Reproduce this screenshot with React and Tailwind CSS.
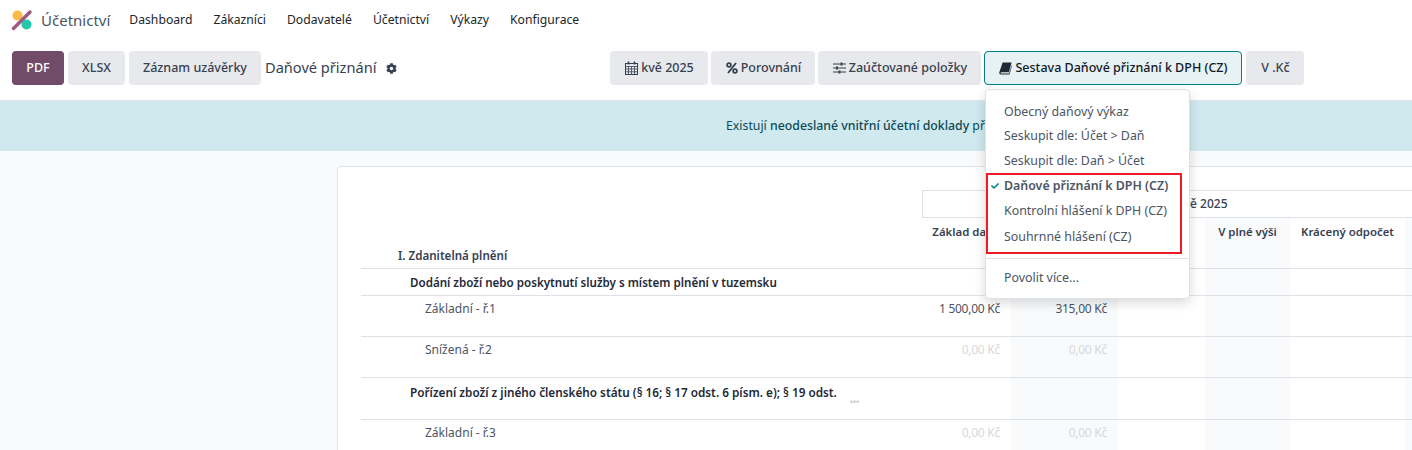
import { FaCheck, FaCog } from "react-icons/fa";

const navItems = ["Dashboard", "Zákazníci", "Dodavatelé", "Účetnictví", "Výkazy", "Konfigurace"];

const Logo = () => (
  <svg width="22" height="22" viewBox="0 0 22 22" className="shrink-0">
    <circle cx="6.5" cy="6.5" r="5" fill="#fbb945" />
    <circle cx="15.5" cy="15.5" r="5" fill="#21c7ab" />
    <path d="M2.5 19.5 L19 3" stroke="#9b5a82" strokeWidth="3.4" strokeLinecap="round" />
  </svg>
);

const CalendarIcon = () => (
  <svg width="13" height="14" viewBox="0 0 13 14" fill="none" stroke="currentColor" className="shrink-0">
    <rect x="0.5" y="2.5" width="12" height="11" />
    <path d="M0.5 5.5H12.5M0.5 8H12.5M0.5 10.8H12.5M3.5 5.5V13.5M6.5 5.5V13.5M9.5 5.5V13.5" strokeWidth="0.8" />
    <path d="M3.5 0.5V3.5M9.5 0.5V3.5" strokeWidth="1.6" />
  </svg>
);

const PercentIcon = () => (
  <svg width="12" height="12" viewBox="0 0 12 12" fill="none" stroke="currentColor" strokeWidth="1.7" className="shrink-0">
    <circle cx="3" cy="3" r="1.9" />
    <circle cx="9" cy="9" r="1.9" />
    <path d="M10 1L2 11" strokeWidth="1.9" />
  </svg>
);

const SlidersIcon = () => (
  <svg width="13" height="12" viewBox="0 0 13 12" fill="none" stroke="currentColor" className="shrink-0">
    <path d="M0 2H13M0 6H13M0 10H13" strokeWidth="1" />
    <path d="M8.5 0.5V3.5M4 4.5V7.5M6.5 8.5V11.5" strokeWidth="2" />
  </svg>
);

const BookIcon = () => (
  <svg width="13" height="13" viewBox="0 0 13 13" className="shrink-0">
    <path d="M3.6 0.5H12.6L10 10.3H2.2C1.4 10.3 1.4 11.5 2.2 11.5H10.2L12.6 3.2L13 3.6L10.6 12.6H2C0.5 12.6 0 11.4 0.4 10.1Z" fill="#1f2937" />
  </svg>
);

const Btn = ({ className = "", children }) => (
  <button className={`flex h-[34px] items-center justify-center whitespace-nowrap rounded text-[12.5px] font-medium ${className}`}>
    {children}
  </button>
);

const Cells = ({ first, base, tax, muted, firstClass = "" }) => (
  <>
    <div className={firstClass}>{first}</div>
    <div className={`pr-[11px] pt-[4px] text-right tracking-[-0.25px] ${muted ? "text-[#d5d8dc]" : "text-[#4b5563]"}`}>{base}</div>
    <div className={`bg-[#f9fafb] pr-[11px] pt-[4px] text-right tracking-[-0.25px] ${muted ? "text-[#d5d8dc]" : "text-[#4b5563]"}`}>{tax}</div>
    <div />
    <div className="bg-[#f9fafb]" />
    <div />
    <div className="bg-[#f9fafb]" />
  </>
);

const Row = ({ height, children }) => (
  <div className={`grid grid-cols-[543px_107px_107px_87px_85px_115px_1fr] border-b border-[#dee2e6] text-[12px] ${height}`}>
    {children}
  </div>
);

const App = () => {
  return (
    <div className="relative h-[450px] w-full overflow-hidden bg-white text-[#374151] font-['Noto_Sans',sans-serif]">
      {/* navbar */}
      <div className="flex h-10 items-center pl-[11px]">
        <Logo />
        <span className="ml-2 text-[15px] text-[#4b5563]">Účetnictví</span>
        <nav className="ml-[19px] flex gap-[21px] text-[12.2px] text-[#212529]">
          {navItems.map((item) => (
            <span key={item}>{item}</span>
          ))}
        </nav>
      </div>

      {/* control panel */}
      <div className="flex h-[61px] items-start border-b border-[#dee2e6] pl-3 pt-[11px]">
        <div className="flex gap-[4px]">
          <Btn className="w-[52px] bg-[#714b67] text-white">PDF</Btn>
          <Btn className="w-[57px] bg-[#e7e9ed]">XLSX</Btn>
          <Btn className="w-[132px] bg-[#e7e9ed]">Záznam uzávěrky</Btn>
        </div>
        <div className="ml-1 flex h-[34px] items-center gap-[10px]">
          <span className="text-[14.6px]">Daňové přiznání</span>
          <FaCog className="text-[11px]" />
        </div>
        <div className="ml-[213px] flex gap-[3px]">
          <Btn className="w-[98px] gap-[3px] bg-[#e7e9ed]"><CalendarIcon />kvě 2025</Btn>
          <Btn className="w-[104px] gap-[3px] bg-[#e7e9ed]"><PercentIcon />Porovnání</Btn>
          <Btn className="w-[163px] gap-[3px] bg-[#e7e9ed]"><SlidersIcon />Zaúčtované položky</Btn>
          <Btn className="w-[258px] gap-[3px] border border-[#017e84] bg-[#e6f2f3] text-[#111827]"><BookIcon />Sestava Daňové přiznání k DPH (CZ)</Btn>
          <Btn className="ml-[1px] w-[58px] bg-[#e7e9ed]">V .Kč</Btn>
        </div>
      </div>

      {/* alert */}
      <div className="flex h-[50px] items-center whitespace-nowrap bg-[#d0e9ee] pl-[726px] text-[12.3px] text-[#0c4a55]">
        <span>Existují <span className="font-medium">neodeslané vnitřní účetní doklady</span> před</span>
      </div>

      {/* report */}
      <div className="h-[299px] bg-[#f9fafb] pl-[337px] pt-[15px]">
        <div className="w-[1200px] rounded-tl border border-[#dee2e6] bg-white pl-[23px] pt-[23px]">
          <div className="ml-[561px] flex h-[28px] items-center whitespace-nowrap border border-[#dee2e6] pl-[254px] text-[12px] font-medium">
            kvě 2025
          </div>
          <Row height="h-[51px]">
            <div className="flex items-end pb-[4px] pl-[37px] text-[11.6px] font-semibold">I. Zdanitelná plnění</div>
            <div className="pr-[11px] pt-[5px] text-right text-[11.4px] font-semibold">Základ daně</div>
            <div className="bg-[#f9fafb]" />
            <div />
            <div className="bg-[#f9fafb] pt-[5px] text-center text-[11.4px] font-semibold">V plné výši</div>
            <div className="pt-[5px] text-center text-[11.4px] font-semibold">Krácený odpočet</div>
            <div className="bg-[#f9fafb]" />
          </Row>
          <Row height="h-[27px]">
            <Cells first="Dodání zboží nebo poskytnutí služby s místem plnění v tuzemsku" firstClass="whitespace-nowrap pl-[49px] pt-[5px] text-[11.6px] font-semibold text-[#1f2937]" />
          </Row>
          <Row height="h-[41px]">
            <Cells first="Základní - ř.1" firstClass="pl-[64px] pt-[4px] text-[#4b5563]" base="1 500,00 Kč" tax="315,00 Kč" />
          </Row>
          <Row height="h-[41px]">
            <Cells first="Snížená - ř.2" firstClass="pl-[64px] pt-[4px] text-[#4b5563]" base="0,00 Kč" tax="0,00 Kč" muted />
          </Row>
          <Row height="h-[42px]">
            <Cells
              first={
                <>
                  <span className="block whitespace-nowrap pt-[4px] leading-5">Pořízení zboží z jiného členského státu (§ 16; § 17 odst. 6 písm. e); § 19 odst.</span>
                  <span className="-mt-[3px] ml-[440px] block text-[8px] leading-[6px] text-[#c5c9ce]">•••</span>
                </>
              }
              firstClass="pl-[49px] text-[11.75px] font-semibold text-[#1f2937]"
            />
          </Row>
          <Row height="h-[41px]">
            <Cells first="Základní - ř.3" firstClass="pl-[64px] pt-[4px] text-[#4b5563]" base="0,00 Kč" tax="0,00 Kč" muted />
          </Row>
        </div>
      </div>

      {/* report dropdown, open over the page */}
      <div className="absolute left-[985px] top-[89px] w-[205px] rounded border border-[#dee2e6] bg-white pt-[10px] text-[12.4px] text-[#4b5563] shadow-[0_4px_12px_rgba(0,0,0,0.15)]">
        {["Obecný daňový výkaz", "Seskupit dle: Účet > Daň", "Seskupit dle: Daň > Účet"].map((item) => (
          <div key={item} className="flex h-[24.5px] items-center pl-[18px]">{item}</div>
        ))}
        <div className="relative flex h-[25px] items-center pl-[18px] font-semibold">
          <FaCheck className="absolute left-[5px] text-[8px] text-[#017e84]" />
          Daňové přiznání k DPH (CZ)
        </div>
        <div className="flex h-[26px] items-center pl-[18px]">Kontrolní hlášení k DPH (CZ)</div>
        <div className="flex h-[26px] items-center pl-[18px]">Souhrnné hlášení (CZ)</div>
        <div className="mt-[7px] border-t border-[#dee2e6]" />
        <div className="flex h-[39px] items-center pl-[18px]">Povolit více...</div>
        <div className="absolute left-0 top-[83px] h-[81px] w-[196px] border-[2.5px] border-[#ed1c24]" />
      </div>
    </div>
  );
};

export default App;
